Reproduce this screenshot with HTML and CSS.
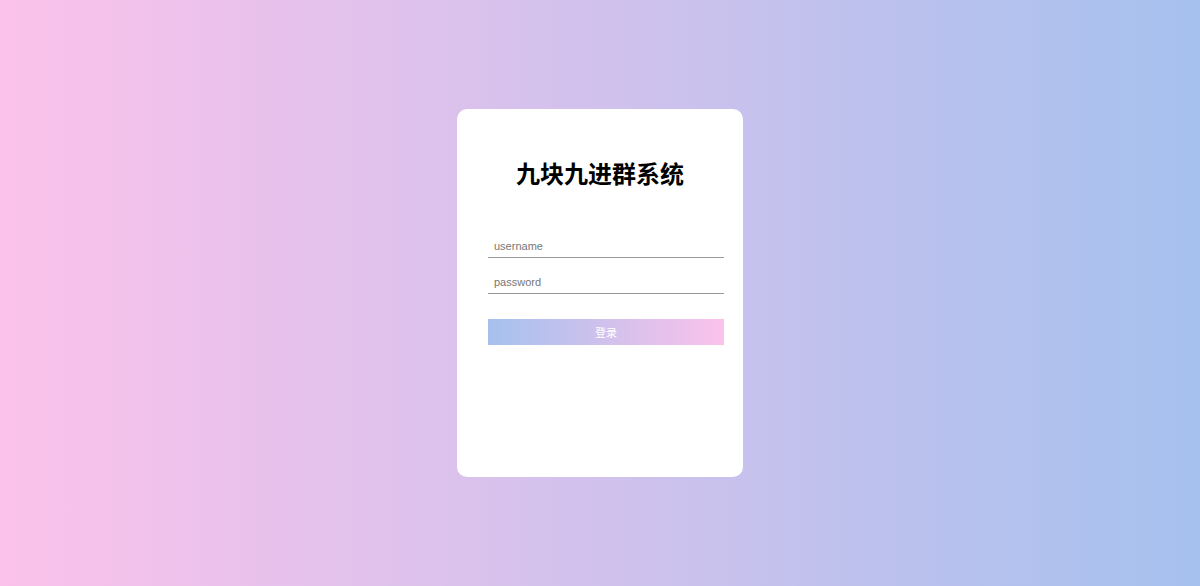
FILE: index.html
```html
<!DOCTYPE html>
<html lang="zh">
<head>
<meta charset="utf-8">
<title>九块九进群系统</title>
<link rel="stylesheet" href="styles.css">
</head>
<body>
<div class="page">
  <div class="card">
    <h1 class="title">九块九进群系统</h1>
    <input class="field field-user" type="text" placeholder="username">
    <input class="field field-pass" type="password" placeholder="password">
    <div class="btn">登录</div>
  </div>
</div>
</body>
</html>
```
FILE: styles.css
```css
html, body {
  margin: 0;
  padding: 0;
  height: 100%;
}
body {
  font-family: "Liberation Sans", "Noto Sans CJK SC", sans-serif;
}
.page {
  box-sizing: border-box;
  height: 586px;
  padding-top: 109px;
  display: flex;
  align-items: flex-start;
  justify-content: center;
  background-image: linear-gradient(to right, #fbc2eb, #a6c1ee);
}
.card {
  box-sizing: border-box;
  width: 286px;
  height: 368px;
  background: #fff;
  border-radius: 10px;
  padding: 49px 19px 0 31px;
  display: flex;
  flex-direction: column;
}
.title {
  margin: 0 0 0 -12px;
  font-family: "Noto Sans CJK SC", sans-serif;
  font-size: 24px;
  font-weight: 700;
  line-height: 30px;
  text-align: center;
  color: #000;
}
.field {
  box-sizing: border-box;
  display: block;
  width: 236px;
  height: 23px;
  margin: 0;
  padding: 0 6px;
  border: 0;
  border-bottom: 1px solid #9a9898;
  outline: none;
  font-family: "Liberation Sans", sans-serif;
  font-size: 11px;
  color: #333;
  background: transparent;
}
.field::placeholder {
  color: #777;
}
.field-user {
  margin-top: 47px;
}
.field-pass {
  margin-top: 13px;
}
.btn {
  margin-top: 25px;
  width: 236px;
  height: 26px;
  line-height: 27px;
  text-align: center;
  color: #fff;
  font-family: "Noto Sans CJK SC", sans-serif;
  font-size: 11px;
  background-image: linear-gradient(to right, #a6c1ee, #fbc2eb);
}
```
